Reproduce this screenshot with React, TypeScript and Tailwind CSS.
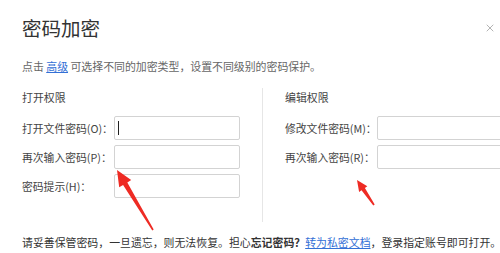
import { X } from "lucide-react";

const font = { fontFamily: '"Noto Sans CJK SC", "Liberation Sans", sans-serif' };

function Field({ label, caret = false, wide = false }: { label: string; caret?: boolean; wide?: boolean }) {
  return (
    <div className="flex h-[24px] items-center">
      <span className="w-[92px] shrink-0 whitespace-nowrap text-[10.8px] text-[#444]">{label}</span>
      <div
        className={`relative h-[24px] shrink-0 rounded-[2px] border border-[#d3d3d3] bg-white ${
          wide ? "w-[140px]" : "w-[126px]"
        }`}
      >
        {caret && <span className="absolute left-[3px] top-[4px] h-[14px] w-px bg-[#222]" />}
      </div>
    </div>
  );
}

export default function App() {
  return (
    <div className="relative h-[253px] w-[500px] overflow-hidden bg-white text-[#333]" style={font}>
      <div className="flex items-center justify-between pl-[22px] pr-[4px] pt-[14px]">
        <h1 className="text-[19.5px] font-normal leading-[28px] text-[#333]">密码加密</h1>
        <X className="h-[12px] w-[12px] text-[#999]" strokeWidth={1.5} />
      </div>

      <p className="mt-[16px] pl-[22px] text-[10.9px] leading-[16px] text-[#666]">
        点击 <span className="text-[#3370d6] underline">高级</span> 可选择不同的加密类型，设置不同级别的密码保护。
      </p>

      <div className="mt-[14px] flex h-[134px] pl-[22px]">
        <div className="w-[240px] shrink-0">
          <div className="text-[10.9px] leading-[18px] text-[#444]">打开权限</div>
          <div className="mt-[10px] flex flex-col gap-[5px]">
            <Field label="打开文件密码(O)：" caret />
            <Field label="再次输入密码(P)：" />
            <Field label="密码提示(H)：" />
          </div>
        </div>
        <div className="flex-1 border-l border-[#e6e6e6] pl-[22px]">
          <div className="text-[10.9px] leading-[18px] text-[#444]">编辑权限</div>
          <div className="mt-[10px] flex flex-col gap-[5px]">
            <Field label="修改文件密码(M)：" wide />
            <Field label="再次输入密码(R)：" wide />
          </div>
        </div>
      </div>

      <p className="mt-[12px] whitespace-nowrap pl-[22px] text-[10.9px] leading-[16px] text-[#333]">
        请妥善保管密码，一旦遗忘，则无法恢复。担心<span className="font-bold">忘记密码？</span>
        <span className="text-[#3370d6] underline">转为私密文档</span>，登录指定账号即可打开。
      </p>

      <svg className="pointer-events-none absolute left-0 top-0" width="500" height="253" viewBox="0 0 500 253">
        <polygon
          points="117,170 131.2,180.1 127.3,182.4 153.7,229.6 152.3,230.4 123.1,185 119.2,187.3"
          fill="#ee2b24"
        />
        <polygon
          points="357,180 367.3,186.3 364.9,188 374.7,204.5 373.3,205.5 361.5,190.2 359.1,191.9"
          fill="#ee2b24"
        />
      </svg>
    </div>
  );
}
